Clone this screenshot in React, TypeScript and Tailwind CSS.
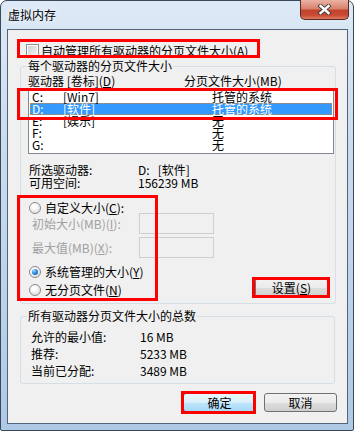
import React from "react";

// mnemonic letter, underlined like the Win7 dialog
const U = ({ c }: { c: string }) => <span className="underline underline-offset-[1px]">{c}</span>;

const Radio = ({ on }: { on?: boolean }) => (
  <span className="flex h-[12px] w-[12px] shrink-0 items-center justify-center rounded-full border border-[#8a8a8a] bg-[radial-gradient(circle_at_40%_35%,#ffffff_20%,#d2d2d2_100%)]">
    {on && (
      <span className="h-[6px] w-[6px] rounded-full bg-[radial-gradient(circle_at_35%_30%,#a8dcff_0%,#2d8ae0_45%,#0a4f9c_100%)]" />
    )}
  </span>
);

const Btn = ({ children, primary }: { children: React.ReactNode; primary?: boolean }) => (
  <div
    className={
      primary
        ? "flex h-[19px] w-[73px] items-center justify-center rounded-[3px] border border-[#3c7fb1] bg-[linear-gradient(180deg,#eaf6fd_0%,#d9f0fc_50%,#bee6fd_51%,#a7d9f5_100%)]"
        : "flex h-[19px] w-[73px] items-center justify-center rounded-[3px] border border-[#707070] bg-[linear-gradient(180deg,#f2f2f2_0%,#ebebeb_50%,#dddddd_51%,#cfcfcf_100%)]"
    }
  >
    {children}
  </div>
);

const drives = [
  { d: "C:", label: "[Win7]", size: "托管的系统" },
  { d: "D:", label: "[软件]", size: "托管的系统", sel: true },
  { d: "E:", label: "[娱乐]", size: "无" },
  { d: "F:", label: "", size: "无" },
  { d: "G:", label: "", size: "无" },
];

export default function App() {
  return (
    <div className="relative h-[431px] w-[354px] overflow-hidden font-['Noto_Sans_CJK_SC',sans-serif] text-[12px] leading-[12px] text-black">
      <div className="flex h-[431px] w-[354px] flex-col rounded-t-[7px] rounded-b-[2px] border border-[#3a4858] bg-[linear-gradient(180deg,#dde9f6_0%,#c9dbee_35%,#bcd2ea_70%,#aec8e6_100%)]">
        {/* title bar */}
        <div className="flex h-[28px] justify-between pl-[7px] pr-[4px]">
          <span className="mt-[8px] text-[12px] [text-shadow:0_0_6px_#ffffff]">虚拟内存</span>
          <div className="-mt-[1px] flex h-[20px] w-[49px] items-center justify-center rounded-b-[5px] border border-t-0 border-[#5b2a22] bg-[linear-gradient(180deg,#eab3a6_0%,#d9826c_45%,#c2432b_55%,#c94b33_80%,#de7a60_100%)]">
            <svg width="15" height="11" viewBox="0 0 15 11">
              <path d="M3.5 2 L11.5 9 M11.5 2 L3.5 9" stroke="#3c3c3c" strokeWidth="4.2" strokeLinecap="square" />
              <path d="M3.5 2 L11.5 9 M11.5 2 L3.5 9" stroke="#ffffff" strokeWidth="2.4" strokeLinecap="square" />
            </svg>
          </div>
        </div>

        {/* client area */}
        <div className="ml-[6px] flex h-[395px] w-[341px] flex-col border border-[#52647a] bg-[#f0f0f0] pl-[12px]">
          <div className="ml-[6px] mt-[14px] flex h-[13px] items-center gap-[2px]">
            <span className="flex h-[13px] w-[13px] items-center justify-center border border-[#8e8f8f] bg-white">
              <span className="h-[9px] w-[9px] bg-[linear-gradient(135deg,#cbcfd5_0%,#f4f4f4_100%)]" />
            </span>
            <span>
              自动管理所有驱动器的分页文件大小(<U c="A" />)
            </span>
          </div>

          <fieldset className="mt-[3px] h-[244px] w-[316px] rounded-[3px] border border-[#d5dfe5] pl-[7px] pr-[1px]">
            <legend className="-ml-[1px] px-[1px] leading-[12px]">每个驱动器的分页文件大小</legend>
            <div className="mt-[3px] flex h-[12px]">
              <span className="w-[156px]">
                驱动器 [卷标](<U c="D" />)
              </span>
              <span>分页文件大小(MB)</span>
            </div>

            <div className="mt-[2px] h-[65px] w-[306px] border border-[#828790] bg-white px-[1px] pt-[1px]">
              {drives.map((r) => (
                <div
                  key={r.d}
                  className={
                    r.sel
                      ? "flex h-[12px] items-center border border-dotted border-[#d9822b] bg-[#3399ff] pl-[1px] text-white"
                      : "flex h-[12px] items-center pl-[2px]"
                  }
                >
                  <span className="w-[31px]">{r.d}</span>
                  <span className="w-[149px]">{r.label}</span>
                  <span>{r.size}</span>
                </div>
              ))}
            </div>

            <div className="mt-[10px] flex h-[12px] pl-[1px]">
              <span className="w-[109px]">所选驱动器:</span>
              <span>D:&nbsp;&nbsp;&nbsp;[软件]</span>
            </div>
            <div className="mt-[1px] flex h-[12px] pl-[1px]">
              <span className="w-[109px]">可用空间:</span>
              <span>156239 MB</span>
            </div>

            <div className="mt-[14px] flex h-[10px] items-center gap-[4px] pl-[1px]">
              <Radio />
              <span>
                自定义大小(<U c="C" />):
              </span>
            </div>
            <div className="flex h-[21px] items-center pl-[4px] text-[#a0a0a0]">
              <span className="w-[107px]">
                初始大小(MB)(<U c="I" />):
              </span>
              <span className="h-[21px] w-[75px] border border-[#cfcfcf] bg-[#f0f0f0]" />
            </div>
            <div className="mt-[3px] flex h-[21px] items-center pl-[4px] text-[#a0a0a0]">
              <span className="w-[107px]">
                最大值(MB)(<U c="X" />):
              </span>
              <span className="h-[21px] w-[75px] border border-[#cfcfcf] bg-[#f0f0f0]" />
            </div>

            <div className="mt-[8px] flex">
              <div className="flex flex-col pl-[1px]">
                <div className="flex h-[12px] items-center gap-[4px]">
                  <Radio on />
                  <span>
                    系统管理的大小(<U c="Y" />)
                  </span>
                </div>
                <div className="mt-[6px] flex h-[12px] items-center gap-[4px]">
                  <Radio />
                  <span>
                    无分页文件(<U c="N" />)
                  </span>
                </div>
              </div>
              <div className="ml-auto mr-[6px] mt-[12px]">
                <Btn>
                  设置(<U c="S" />)
                </Btn>
              </div>
            </div>
          </fieldset>

          <fieldset className="mt-[6px] h-[74px] w-[315px] rounded-[3px] border border-[#d5dfe5] pl-[7px] pr-[1px]">
            <legend className="-ml-[1px] px-[1px] leading-[12px]">所有驱动器分页文件大小的总数</legend>
            <div className="mt-[6px] flex flex-col pl-[3px]">
              <div className="flex h-[17px] items-center">
                <span className="w-[109px]">允许的最小值:</span>
                <span>16 MB</span>
              </div>
              <div className="flex h-[17px] items-center">
                <span className="w-[109px]">推荐:</span>
                <span>5233 MB</span>
              </div>
              <div className="flex h-[17px] items-center">
                <span className="w-[109px]">当前已分配:</span>
                <span>3489 MB</span>
              </div>
            </div>
          </fieldset>

          <div className="mt-[9px] flex justify-end gap-[8px] pr-[10px]">
            <Btn primary>确定</Btn>
            <Btn>取消</Btn>
          </div>
        </div>
      </div>

      {/* red annotation boxes drawn over the dialog */}
      <div className="pointer-events-none absolute left-[17px] top-[39px] h-[19px] w-[243px] border-[3px] border-[#ff0000]" />
      <div className="pointer-events-none absolute left-[17px] top-[88px] h-[32px] w-[321px] border-[3px] border-[#ff0000]" />
      <div className="pointer-events-none absolute left-[17px] top-[195px] h-[106px] w-[141px] border-[3px] border-[#ff0000]" />
      <div className="pointer-events-none absolute left-[252px] top-[277px] h-[21px] w-[78px] border-[3px] border-[#ff0000]" />
      <div className="pointer-events-none absolute left-[181px] top-[391px] h-[23px] w-[75px] border-[3px] border-[#ff0000]" />
    </div>
  );
}
